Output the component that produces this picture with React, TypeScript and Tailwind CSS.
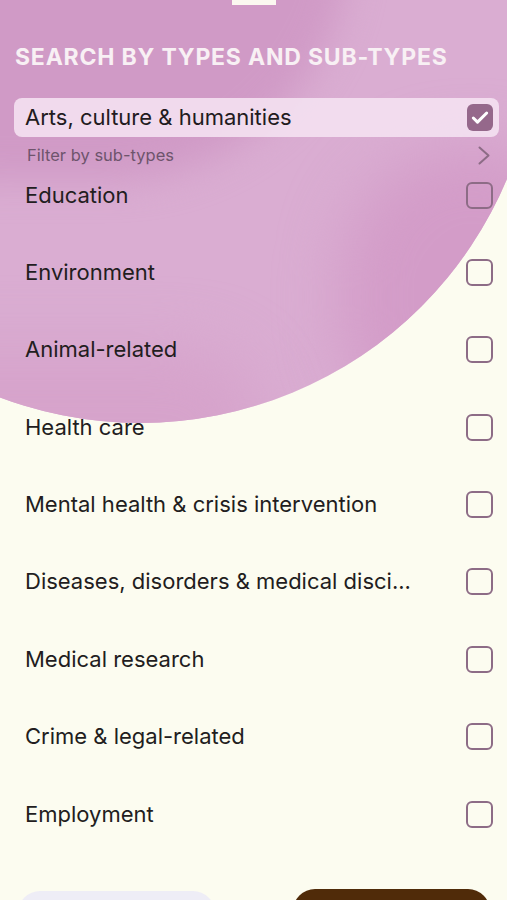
import { Check } from 'lucide-react';

const types = [
  'Education',
  'Environment',
  'Animal-related',
  'Health care',
  'Mental health & crisis intervention',
  'Diseases, disorders & medical disci...',
  'Medical research',
  'Crime & legal-related',
  'Employment',
];

function Checkbox({ checked }: { checked?: boolean }) {
  if (checked) {
    return (
      <span className="flex h-[27px] w-[26px] shrink-0 items-center justify-center rounded-[6px] bg-[#95688b]">
        <Check className="h-[20px] w-[20px] text-white" strokeWidth={3.6} />
      </span>
    );
  }
  return (
    <span className="h-[27px] w-[27px] shrink-0 rounded-[6px] border-2 border-[#8d6c86]" />
  );
}

export default function App() {
  return (
    <div className="relative h-[900px] w-full overflow-hidden bg-[#fcfcf0] font-['Inter',sans-serif]">
      {/* background blob */}
      <div className="pointer-events-none absolute left-[-258px] top-[-373px] h-[796px] w-[796px] overflow-hidden rounded-full bg-[#daadd2]">
        <div className="absolute left-[8px] top-[73px] h-[480px] w-[600px] rounded-full bg-[#d09ac6] blur-[18px]" />
        <div className="absolute left-[600px] top-[520px] h-[300px] w-[260px] rounded-full bg-[#d39cc8] blur-[30px]" />
        <div className="absolute left-[120px] top-[720px] h-[160px] w-[400px] rounded-full bg-[#d6a3cb] blur-[30px]" />
      </div>
      <div className="absolute left-[232px] top-0 h-[5px] w-[44px] bg-[#fbf8f0]" />

      <div className="relative flex flex-col pt-[43px]">
        <h1 className="px-[15px] text-[23px] font-bold leading-[28px] tracking-[0.8px] text-[#f8f0f4]">
          SEARCH BY TYPES AND SUB-TYPES
        </h1>

        <div className="mx-[14px] mr-[8px] mt-[27px] flex h-[39px] items-center justify-between rounded-[8px] bg-[#f4e1f1]/90 pl-[11px] pr-[6px]">
          <span className="text-[22px] text-[#221a20]">Arts, culture &amp; humanities</span>
          <Checkbox checked />
        </div>

        <div className="flex h-[33px] items-center justify-between pl-[27px] pr-[17px] pt-[4px]">
          <span className="text-[16.5px] text-[#6e546c]">Filter by sub-types</span>
          <svg width="12" height="19" viewBox="0 0 12 19" fill="none" className="text-[#8d6c86]">
            <polyline points="1.5,1.5 10.5,9.5 1.5,17.5" stroke="currentColor" strokeWidth="2" strokeLinecap="round" strokeLinejoin="round" />
          </svg>
        </div>

        <ul className="flex flex-col gap-[27.4px]">
          {types.map((t) => (
            <li key={t} className="flex h-[50px] items-center justify-between pl-[25px] pr-[14px]">
              <span className="whitespace-nowrap text-[22px] text-[#221d20]">{t}</span>
              <Checkbox />
            </li>
          ))}
        </ul>

        <div className="mt-[50px] flex items-start justify-between pl-[18px] pr-[17px]">
          <button className="mt-[2px] h-[50px] w-[197px] rounded-[22px] bg-[#eeedf6]" />
          <button className="h-[50px] w-[197px] rounded-[22px] bg-[#502b09]" />
        </div>
      </div>
    </div>
  );
}
